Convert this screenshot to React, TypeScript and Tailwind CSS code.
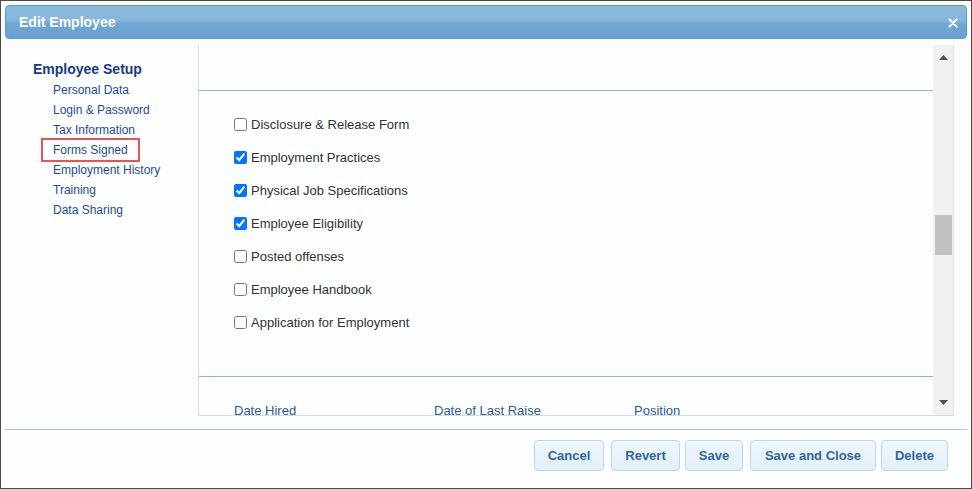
import React from 'react'

const navItems = [
  'Personal Data',
  'Login & Password',
  'Tax Information',
  'Forms Signed',
  'Employment History',
  'Training',
  'Data Sharing',
]

const forms = [
  { label: 'Disclosure & Release Form', checked: false },
  { label: 'Employment Practices', checked: true },
  { label: 'Physical Job Specifications', checked: true },
  { label: 'Employee Eligibility', checked: true },
  { label: 'Posted offenses', checked: false },
  { label: 'Employee Handbook', checked: false },
  { label: 'Application for Employment', checked: false },
]

const buttons = [
  { label: 'Cancel', w: 'w-[70px]', ml: '' },
  { label: 'Revert', w: 'w-[69px]', ml: 'ml-[7px]' },
  { label: 'Save', w: 'w-[58px]', ml: 'ml-[5px]' },
  { label: 'Save and Close', w: 'w-[126px]', ml: 'ml-[7px]' },
  { label: 'Delete', w: 'w-[67px]', ml: 'ml-[5px]' },
]

export default function App() {
  return (
    <div className="w-[972px] h-[489px] flex flex-col bg-[#fcfdfd] border border-[#4b4b4b] font-['Liberation_Sans',Arial,sans-serif] overflow-hidden">
      {/* ── Title bar ── */}
      <div className="mx-[4px] mt-[4px] h-[34px] shrink-0 flex items-center justify-between rounded-[4px] border border-[#5b9bd5] bg-[linear-gradient(to_bottom,#8cbbdf_0%,#86b6dc_45%,#6fa7d3_55%,#67a1d0_100%)] pl-[13px] pr-[8px]">
        <span className="text-white font-bold text-[14px] leading-none">Edit Employee</span>
        <svg width="10" height="10" viewBox="0 0 10 10" className="mt-[1px]">
          <path d="M1.5 1.5 L8.5 8.5 M8.5 1.5 L1.5 8.5" stroke="#eef4fa" strokeWidth="2.4" strokeLinecap="round" />
        </svg>
      </div>

      {/* ── Body ── */}
      <div className="flex pt-[6px] h-[390px] shrink-0">
        <nav className="w-[197px] shrink-0 pt-[14px] pl-[32px]">
          <p className="text-[14px] leading-[20px] font-bold text-[#173a84]">Employee Setup</p>
          <ul className="pl-[20px] mt-[1px]">
            {navItems.map((item) => (
              <li key={item} className="relative text-[12px] leading-[20px] text-[#1f4b9c]">
                {item === 'Forms Signed' && (
                  <span className="absolute -left-[12px] -top-[2px] w-[99px] h-[24px] border-2 border-[#e35656]" />
                )}
                {item}
              </li>
            ))}
          </ul>
        </nav>

        <div className="w-[756px] h-[371px] flex border-l border-b border-[#d9d9d9]">
          <div className="flex-1 overflow-hidden">
            <div className="h-[46px] border-b border-[#8ab4ef]" />
            <div className="pl-[35px] pt-[17px] pb-[37px] border-b border-[#8ab4ef]">
              {forms.map((f) => (
                <label key={f.label} className="h-[33px] flex items-center text-[13px] text-[#333333]">
                  <input type="checkbox" defaultChecked={f.checked} className="w-[13px] h-[13px] mr-[4px]" />
                  {f.label}
                </label>
              ))}
            </div>
            <div className="pl-[35px] pt-[26px] flex text-[13px] leading-[15px] text-[#2c5a9e]">
              <span className="w-[200px]">Date Hired</span>
              <span className="w-[200px]">Date of Last Raise</span>
              <span>Position</span>
            </div>
          </div>

          {/* scrollbar */}
          <div className="w-[21px] shrink-0 bg-[#f1f1f1] border-r border-[#e2e2e2] flex flex-col items-center">
            <svg width="9" height="5" viewBox="0 0 9 5" className="mt-[10px]">
              <path d="M0 5 L4.5 0 L9 5 Z" fill="#505050" />
            </svg>
            <div className="mt-[155px] ml-[1px] w-[17px] h-[40px] bg-[#c1c1c1]" />
            <svg width="9" height="5" viewBox="0 0 9 5" className="mt-auto mb-[10px]">
              <path d="M0 0 L9 0 L4.5 5 Z" fill="#505050" />
            </svg>
          </div>
        </div>
      </div>

      {/* ── Footer ── */}
      <div className="mx-[4px] border-t border-[#a9c3d7] flex justify-end pt-[10px] pr-[19px]">
        {buttons.map((b) => (
          <button
            key={b.label}
            className={`${b.w} ${b.ml} h-[31px] rounded-[4px] border border-[#bcd6ec] bg-[linear-gradient(to_bottom,#eef6fd,#e2effa)] text-[13px] font-bold text-[#2f65a2]`}
          >
            {b.label}
          </button>
        ))}
      </div>
    </div>
  )
}
